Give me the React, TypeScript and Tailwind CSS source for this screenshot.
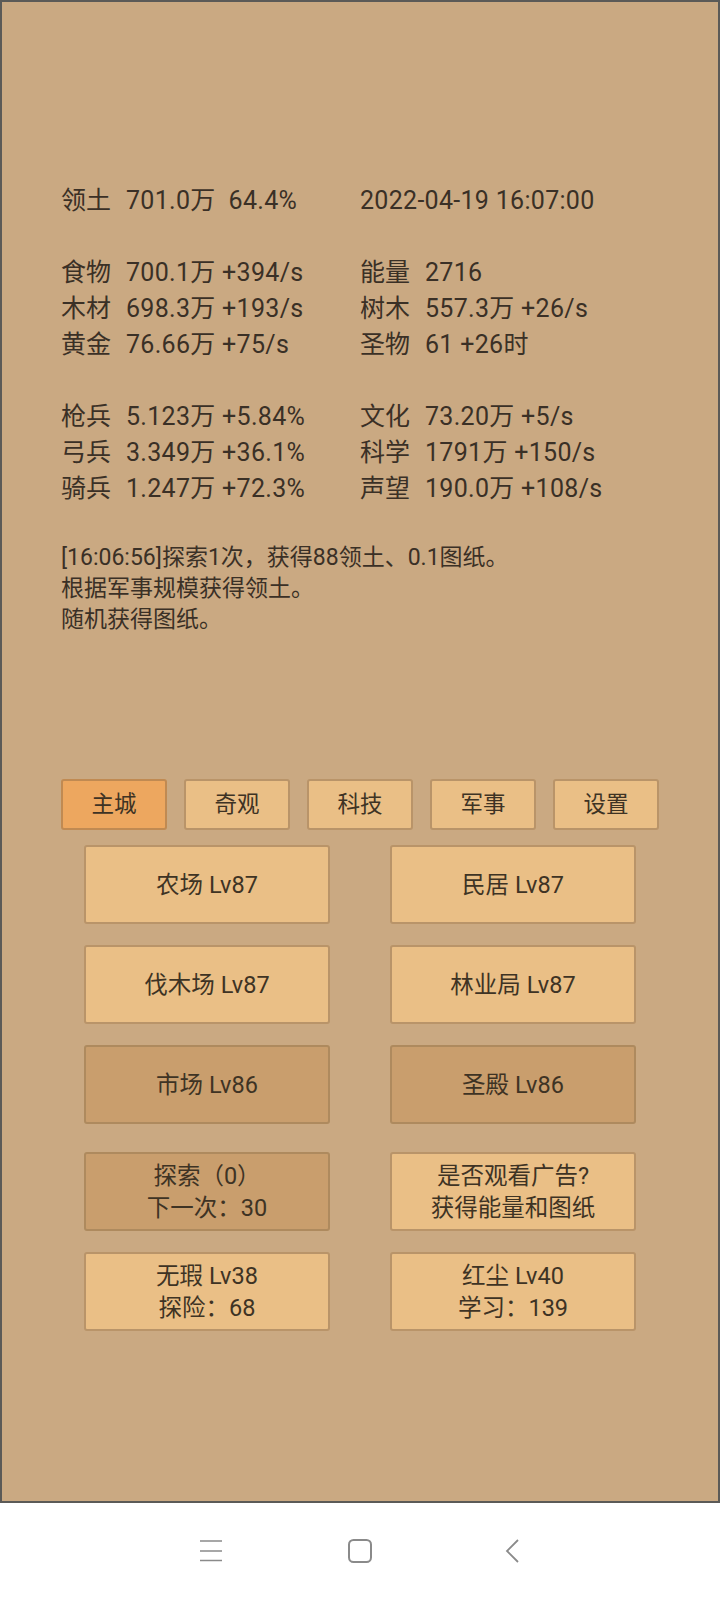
import type { ReactNode } from 'react'

const FONT = "font-['Roboto','Noto_Sans_CJK_SC',sans-serif]"

type Stat = { label: string; value: string }

const topRow: [Stat, Stat] = [
  { label: '领土', value: '701.0万  64.4%' },
  { label: '', value: '2022-04-19 16:07:00' },
]

const resources: [Stat, Stat][] = [
  [{ label: '食物', value: '700.1万 +394/s' }, { label: '能量', value: '2716' }],
  [{ label: '木材', value: '698.3万 +193/s' }, { label: '树木', value: '557.3万 +26/s' }],
  [{ label: '黄金', value: '76.66万 +75/s' }, { label: '圣物', value: '61 +26时' }],
]

const army: [Stat, Stat][] = [
  [{ label: '枪兵', value: '5.123万 +5.84%' }, { label: '文化', value: '73.20万 +5/s' }],
  [{ label: '弓兵', value: '3.349万 +36.1%' }, { label: '科学', value: '1791万 +150/s' }],
  [{ label: '骑兵', value: '1.247万 +72.3%' }, { label: '声望', value: '190.0万 +108/s' }],
]

const tabs = ['主城', '奇观', '科技', '军事', '设置']

function StatCell({ stat }: { stat: Stat }) {
  if (!stat.label) return <div className="whitespace-pre tracking-[0.3px]">{stat.value}</div>
  return (
    <div className="flex">
      <span className="w-[65px] shrink-0">{stat.label}</span>
      <span className="whitespace-pre tracking-[0.3px]">{stat.value}</span>
    </div>
  )
}

function StatRow({ row }: { row: [Stat, Stat] }) {
  return (
    <div className="grid grid-cols-[299px_1fr] h-[36px] items-center">
      <StatCell stat={row[0]} />
      <StatCell stat={row[1]} />
    </div>
  )
}

function Btn({ children, dark }: { children: ReactNode; dark?: boolean }) {
  return (
    <div
      className={`h-[79px] w-[246px] rounded-[3px] border-2 flex flex-col items-center justify-center text-[23.5px] leading-[32px] text-[#3e3324] ${
        dark ? 'bg-[#c99e6d] border-[#ae8a5e]' : 'bg-[#eabf86] border-[#b99469]'
      }`}
    >
      {children}
    </div>
  )
}

export default function App() {
  return (
    <div className={`w-[720px] h-[1600px] flex flex-col bg-white ${FONT}`}>
      {/* Game panel */}
      <div className="h-[1503px] border-2 border-[#5b5a57] bg-[#caa982] text-[#3a3026] pt-[180px]">
        <div className="pl-[59px] text-[25px]">
          <StatRow row={topRow} />
          <div className="h-[36px]" />
          {resources.map((r, i) => (
            <StatRow key={i} row={r} />
          ))}
          <div className="h-[36px]" />
          {army.map((r, i) => (
            <StatRow key={i} row={r} />
          ))}
        </div>

        {/* Log */}
        <div className="pl-[59px] mt-[36px] text-[23px] leading-[31px]">
          <div>[16:06:56]探索1次，获得88领土、0.1图纸。</div>
          <div>根据军事规模获得领土。</div>
          <div>随机获得图纸。</div>
        </div>

        {/* Tabs */}
        <div className="mt-[144px] pl-[59px] flex gap-[17px]">
          {tabs.map((t, i) => (
            <div
              key={t}
              className={`w-[106px] h-[51px] rounded-[3px] border-2 flex items-center justify-center text-[22.5px] text-[#3e3324] ${
                i === 0 ? 'bg-[#eda75f] border-[#c08a52]' : 'bg-[#eabf86] border-[#b99469]'
              }`}
            >
              {t}
            </div>
          ))}
        </div>

        {/* Buildings */}
        <div className="mt-[15px] pl-[82px] grid grid-cols-[246px_246px] gap-x-[60px] gap-y-[21px]">
          <Btn>农场 Lv87</Btn>
          <Btn>民居 Lv87</Btn>
          <Btn>伐木场 Lv87</Btn>
          <Btn>林业局 Lv87</Btn>
          <Btn dark>市场 Lv86</Btn>
          <Btn dark>圣殿 Lv86</Btn>
        </div>

        <div className="mt-[28px] pl-[82px] grid grid-cols-[246px_246px] gap-x-[60px] gap-y-[21px]">
          <Btn dark>
            <span>探索（0）</span>
            <span>下一次：30</span>
          </Btn>
          <Btn>
            <span>是否观看广告?</span>
            <span>获得能量和图纸</span>
          </Btn>
          <Btn>
            <span>无瑕 Lv38</span>
            <span>探险：68</span>
          </Btn>
          <Btn>
            <span>红尘 Lv40</span>
            <span>学习：139</span>
          </Btn>
        </div>
      </div>

      {/* Navigation bar */}
      <div className="flex-1 flex items-center pl-[200px] pb-[2px] text-[#8a8a8a]">
        <svg width="22" height="24" viewBox="0 0 22 24">
          <path d="M0 2h22M0 12h22M0 21.5h22" stroke="currentColor" strokeWidth="1.6" />
        </svg>
        <svg width="24" height="24" viewBox="0 0 24 24" className="ml-[126px]">
          <rect x="1" y="1" width="22" height="22" rx="4.5" fill="none" stroke="currentColor" strokeWidth="2" />
        </svg>
        <svg width="14" height="24" viewBox="0 0 14 24" className="ml-[133px]">
          <path d="M13 1L2 12l11 11" fill="none" stroke="currentColor" strokeWidth="1.8" />
        </svg>
      </div>
    </div>
  )
}
